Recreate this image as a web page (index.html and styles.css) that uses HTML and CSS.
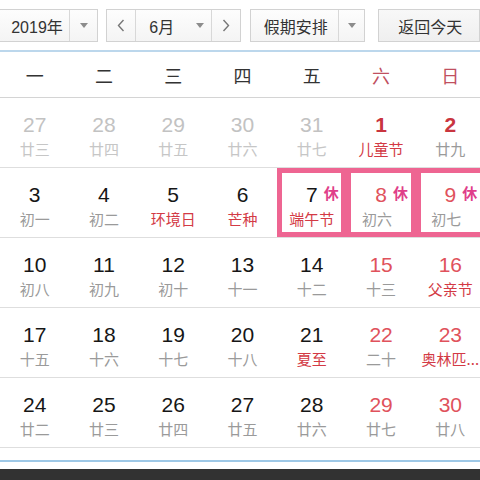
FILE: index.html
```html
<!DOCTYPE html>
<html lang="zh-CN">
<head>
<meta charset="utf-8">
<title>万年历</title>
<link rel="stylesheet" href="styles.css">
</head>
<body>
<div class="page">
  <div class="toolbar">
    <div class="sel year">
      <span class="sel-text">2019年</span>
      <span class="sel-arrow"><i class="tri"></i></span>
    </div>
    <div class="month-group">
      <span class="nav"><svg width="8" height="13" viewBox="0 0 8 13"><polyline points="6.5,1 1.5,6.5 6.5,12" fill="none" stroke="#777" stroke-width="1.4"/></svg></span>
      <span class="month"><span class="month-text">6月</span><i class="tri"></i></span>
      <span class="nav"><svg width="8" height="13" viewBox="0 0 8 13"><polyline points="1.5,1 6.5,6.5 1.5,12" fill="none" stroke="#777" stroke-width="1.4"/></svg></span>
    </div>
    <div class="sel holiday">
      <span class="sel-text">假期安排</span>
      <span class="sel-arrow"><i class="tri"></i></span>
    </div>
    <button class="today">返回今天</button>
  </div>
  <div class="rule-blue"></div>
  <div class="weekdays">
    <span>一</span><span>二</span><span>三</span><span>四</span><span>五</span><span class="wk">六</span><span class="wk">日</span>
  </div>
  <div class="grid">
    <div class="week">
      <div class="day other"><b>27</b><em>廿三</em></div>
      <div class="day other"><b>28</b><em>廿四</em></div>
      <div class="day other"><b>29</b><em>廿五</em></div>
      <div class="day other"><b>30</b><em>廿六</em></div>
      <div class="day other"><b>31</b><em>廿七</em></div>
      <div class="day weekend dark"><b>1</b><em class="fest">儿童节</em></div>
      <div class="day weekend dark"><b>2</b><em>廿九</em></div>
    </div>
    <div class="week">
      <div class="day"><b>3</b><em>初一</em></div>
      <div class="day"><b>4</b><em>初二</em></div>
      <div class="day"><b>5</b><em class="fest">环境日</em></div>
      <div class="day"><b>6</b><em class="fest">芒种</em></div>
      <div class="day off"><div class="inner"><b>7<i class="rest">休</i></b><em class="fest">端午节</em></div></div>
      <div class="day off weekend"><div class="inner"><b>8<i class="rest">休</i></b><em class="shift">初六</em></div></div>
      <div class="day off weekend"><div class="inner"><b>9<i class="rest">休</i></b><em class="shift">初七</em></div></div>
    </div>
    <div class="week">
      <div class="day"><b>10</b><em>初八</em></div>
      <div class="day"><b>11</b><em>初九</em></div>
      <div class="day"><b>12</b><em>初十</em></div>
      <div class="day"><b>13</b><em>十一</em></div>
      <div class="day"><b>14</b><em>十二</em></div>
      <div class="day weekend"><b>15</b><em>十三</em></div>
      <div class="day weekend"><b>16</b><em class="fest">父亲节</em></div>
    </div>
    <div class="week">
      <div class="day"><b>17</b><em>十五</em></div>
      <div class="day"><b>18</b><em>十六</em></div>
      <div class="day"><b>19</b><em>十七</em></div>
      <div class="day"><b>20</b><em>十八</em></div>
      <div class="day"><b>21</b><em class="fest">夏至</em></div>
      <div class="day weekend"><b>22</b><em>二十</em></div>
      <div class="day weekend"><b>23</b><em class="fest">奥林匹...</em></div>
    </div>
    <div class="week">
      <div class="day"><b>24</b><em>廿二</em></div>
      <div class="day"><b>25</b><em>廿三</em></div>
      <div class="day"><b>26</b><em>廿四</em></div>
      <div class="day"><b>27</b><em>廿五</em></div>
      <div class="day"><b>28</b><em>廿六</em></div>
      <div class="day weekend"><b>29</b><em>廿七</em></div>
      <div class="day weekend"><b>30</b><em>廿八</em></div>
    </div>
  </div>
  <div class="rule-bottom"></div>
  <div class="footer-bar"></div>
</div>
</body>
</html>
```

FILE: styles.css
```css
* { box-sizing: border-box; }
html, body {
  margin: 0;
  padding: 0;
  background: #fff;
  overflow: hidden;
}
body {
  width: 480px;
  height: 480px;
  font-family: "Liberation Sans", Arial, "Noto Sans CJK SC", sans-serif;
  color: #222;
}
.page {
  width: 480px;
  height: 480px;
  display: flex;
  flex-direction: column;
  overflow: hidden;
}

/* toolbar */
.toolbar {
  height: 50px;
  padding-top: 9px;
  display: flex;
  align-items: flex-start;
  flex-shrink: 0;
}
.sel, .month-group, .today {
  height: 33px;
  border: 1px solid #d2d2d2;
  background: linear-gradient(#fdfdfd, #f4f4f4);
  display: flex;
  align-items: stretch;
  font-size: 16px;
  color: #333;
}
.sel-text {
  display: flex;
  align-items: center;
  justify-content: center;
  border-right: 1px solid #d8d8d8;
}
.sel-arrow {
  display: flex;
  align-items: center;
  justify-content: center;
  flex: 1;
}
.tri {
  display: block;
  width: 0;
  height: 0;
  border-left: 4px solid transparent;
  border-right: 4px solid transparent;
  border-top: 5px solid #8c8c8c;
}
.year {
  margin-left: -1px;
  width: 102px;
}
.year .sel-text { width: 70px; padding-left: 5px; }

.month-group {
  margin-left: 8px;
  width: 135px;
}
.nav {
  width: 28px;
  display: flex;
  align-items: center;
  justify-content: center;
}
.month {
  width: 77px;
  border-left: 1px solid #d8d8d8;
  border-right: 1px solid #d8d8d8;
  display: flex;
  align-items: center;
  padding-left: 13px;
}
.month-text { width: 47px; }

.holiday {
  margin-left: 9px;
  width: 118px;
}
.holiday .sel-text { width: 88px; padding-left: 2px; }

.today {
  margin-left: 13px;
  width: 104px;
  justify-content: flex-start;
  padding: 0 0 0 19px;
  align-items: center;
  background: linear-gradient(#f8f8f8, #efefef);
  font-family: "Liberation Sans", "Noto Sans CJK SC", sans-serif;
}

.rule-blue {
  height: 2px;
  background: #bcd7ec;
  flex-shrink: 0;
}

/* weekdays */
.weekdays {
  width: 485px;
  height: 46px;
  display: grid;
  grid-template-columns: repeat(7, 1fr);
  align-items: center;
  border-bottom: 1px solid #d4d4d4;
  flex-shrink: 0;
}
.weekdays span {
  text-align: center;
  font-size: 18px;
  color: #333;
  font-family: "Noto Sans CJK SC", sans-serif;
  padding-top: 1px;
}
.weekdays .wk { color: #c0505f; }

/* grid */
.grid {
  width: 485px;
  flex-shrink: 0;
}
.week {
  height: 70px;
  display: grid;
  grid-template-columns: repeat(7, 1fr);
  border-bottom: 1px solid #dedede;
}
.day {
  display: flex;
  flex-direction: column;
  align-items: center;
  padding-top: 16px;
  gap: 4px;
}
.day b {
  font-weight: normal;
  font-size: 21px;
  line-height: 22px;
  color: #161616;
  position: relative;
}
.day em {
  font-style: normal;
  font-size: 15px;
  line-height: 18px;
  color: #9a9a9a;
  font-family: "Noto Sans CJK SC", sans-serif;
  white-space: nowrap;
}
.day em.fest { color: #d33a45; }
.day.other b { color: #c2c2c2; }
.day.other em { color: #c6c6c6; }
.day.weekend b { color: #e0525c; }
.day.weekend.dark b { color: #c9353f; font-weight: bold; }

.day.off {
  background: #ee6592;
  padding: 5px;
  gap: 0;
  height: 69px;
}
.day.off .inner {
  background: #fff;
  width: 100%;
  height: 100%;
  display: flex;
  flex-direction: column;
  align-items: center;
  padding-top: 11px;
  gap: 4px;
}
.day.off em.shift { margin-right: 8px; }
.rest {
  position: absolute;
  left: 100%;
  top: 0;
  margin-left: 6px;
  font-style: normal;
  font-weight: bold;
  font-size: 15px;
  line-height: 18px;
  color: #df3f8a;
  font-family: "Noto Sans CJK SC", sans-serif;
}

.rule-bottom {
  margin-top: 12px;
  height: 2px;
  background: #9ec8e6;
  flex-shrink: 0;
}
.footer-bar {
  margin-top: 7px;
  height: 12px;
  background: #323232;
  flex-shrink: 0;
}
```
